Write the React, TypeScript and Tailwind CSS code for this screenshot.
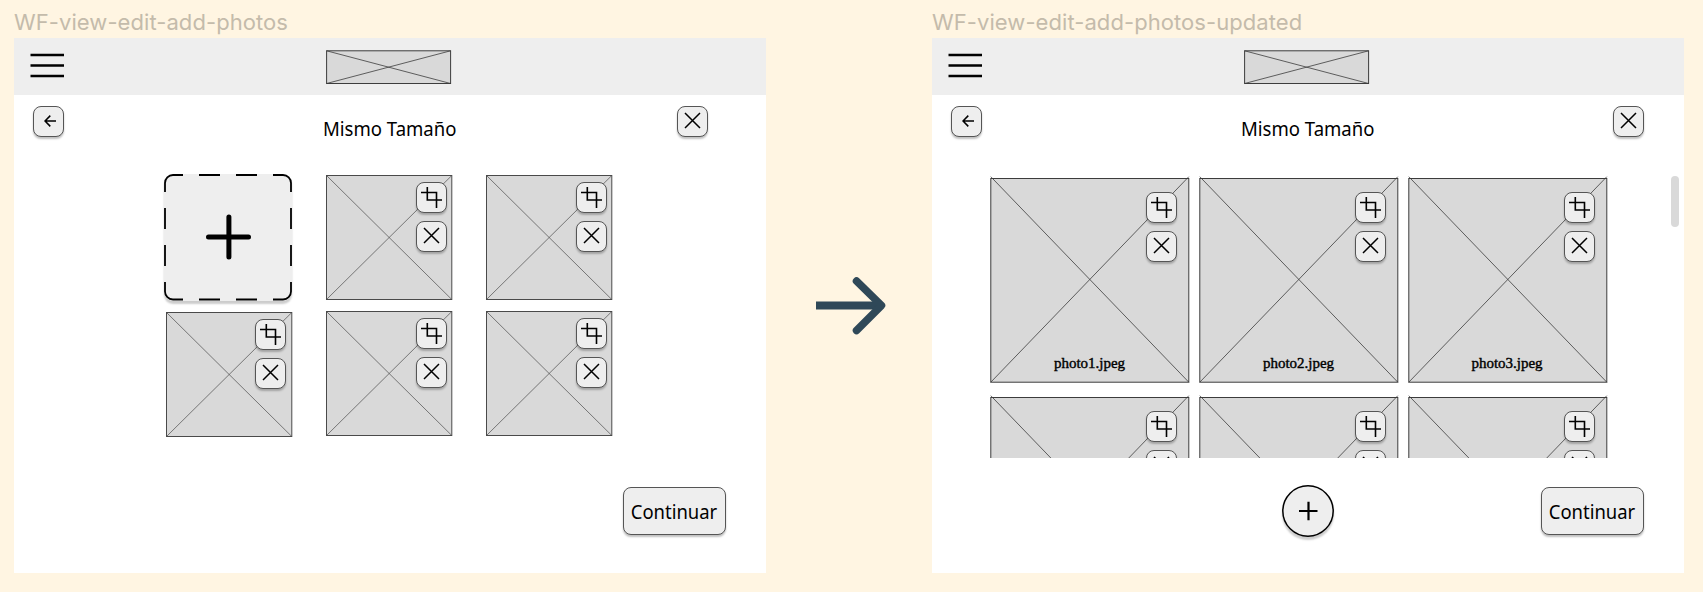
import type { ReactNode } from "react";

function IconButton({ children, className = "" }: { children: ReactNode; className?: string }) {
  return (
    <button
      className={`flex h-[31px] w-[31px] shrink-0 items-center justify-center rounded-[8px] border border-[#555] bg-[#eee] shadow-[0_2px_2px_rgba(0,0,0,0.25)] ${className}`}
    >
      {children}
    </button>
  );
}

function CloseIcon() {
  return (
    <svg width="17" height="17" viewBox="0 0 17 17" className="relative -top-px" fill="none" stroke="#000" strokeWidth="1.5">
      <path d="M1 1L16 16M16 1L1 16" />
    </svg>
  );
}

function CropIcon() {
  return (
    <svg width="21" height="21" viewBox="0 0 21 21" fill="none" stroke="#000" strokeWidth="1.6">
      <path d="M0 5.5H15.5V21M6.3 0V13H21" />
    </svg>
  );
}

function BackIcon() {
  return (
    <svg width="12" height="12" viewBox="0 0 12 12" className="relative -top-px left-px" fill="none" stroke="#000" strokeWidth="1.5">
      <path d="M12 6H1M6.3 0.6L1 6L6.3 11.4" />
    </svg>
  );
}

function TileActions({ className }: { className: string }) {
  return (
    <div className={`absolute flex flex-col gap-[8px] ${className}`}>
      <IconButton>
        <CropIcon />
      </IconButton>
      <IconButton>
        <CloseIcon />
      </IconButton>
    </div>
  );
}

function SmallPhoto({ className = "" }: { className?: string }) {
  return (
    <div className={`relative h-[126px] w-[127px] ${className}`}>
      <svg width="127" height="126" viewBox="0 0 127 126" className="block" stroke="#4a4a4a">
        <rect x="0.5" y="0.5" width="125.3" height="124" fill="#d9d9d9" strokeWidth="1" />
        <path d="M0.5 0.5L125.8 124.500M125.8 0.5L0.5 124.500" strokeWidth="0.7" />
      </svg>
      <TileActions className="left-[89.8px] top-[7px]" />
    </div>
  );
}

function LargePhoto({ name }: { name?: string }) {
  return (
    <div className="relative h-[207px] w-[200px]">
      <svg width="200" height="207" viewBox="0 0 200 207" className="block" stroke="#3c3c3c">
        <rect x="0.8" y="2.5" width="198" height="203.700" fill="#d9d9d9" strokeWidth="1" />
        <path d="M0.8 0.7L198.8 206.2M198.8 0.7L0.8 206.2" strokeWidth="0.8" />
      </svg>
      <TileActions className="left-[156.3px] top-[16px]" />
      {name && (
        <span className="absolute left-0 right-[1px] top-[177px] text-center font-['Liberation_Serif',serif] text-[15px] leading-[20px] text-black [-webkit-text-stroke:0.4px_black]">
          {name}
        </span>
      )}
    </div>
  );
}

function AddTile() {
  return (
    <div className="-ml-[1.5px] h-[127px] w-[128px] rounded-[9px] bg-[#eee] shadow-[0_3px_2px_rgba(0,0,0,0.2)]">
      <svg width="128" height="127" viewBox="0 0 128 127" className="block" fill="none" stroke="#000">
        <path
          strokeWidth="1.8"
          d="M19 1H9A8 8 0 0 0 1 9V18M109 1H119A8 8 0 0 1 127 9V18M19 125.5H9A8 8 0 0 1 1 117.500V108M109 125.500H119A8 8 0 0 0 127 117.500V108M35 1H56M72 1H93M35 125.500H56M72 125.500H93M1 34V55M1 71V92M127 34V55M127 71V92"
        />
        <path strokeWidth="5" strokeLinecap="round" d="M44.5 63H84.500M64.900 43V83" />
      </svg>
    </div>
  );
}

function Frame({ title, closeClass, children }: { title: string; closeClass: string; children: ReactNode }) {
  return (
    <section className="w-[752px] shrink-0">
      <h2 className="h-[38px] whitespace-nowrap pt-[8px] font-['Inter',sans-serif] text-[22px] leading-[28px] tracking-[0.07px] text-[#c4bbab]">
        {title}
      </h2>
      <div className="h-[535px] bg-white">
        <header className="flex h-[57px] bg-[#eee]">
          <svg width="34" height="26" viewBox="0 0 34 26" className="ml-[16px] mt-[15px]" stroke="#000" strokeWidth="2.4">
            <path d="M0.5 2H34M0.5 12.500H34M0.5 23H34" />
          </svg>
          <svg width="126" height="35" viewBox="0 0 126 35" className="ml-[262px] mt-[12px]" stroke="#3c3c3c">
            <rect x="0.6" y="0.8" width="124" height="32.700" fill="#d9d9d9" />
            <path d="M0.6 0.800L124.600 33.500M124.600 0.800L0.6 33.500" strokeWidth="0.8" />
          </svg>
        </header>
        <div className="flex h-[79px] pt-[11px]">
          <IconButton className="ml-[19px]">
            <BackIcon />
          </IconButton>
          <h1 className="ml-[259px] mt-[7px] w-[132px] origin-left scale-x-[0.904] whitespace-nowrap font-['Noto_Sans',sans-serif] text-[20.5px] leading-[30px] text-black">
            Mismo Tamaño
          </h1>
          <IconButton className={closeClass}>
            <CloseIcon />
          </IconButton>
        </div>
        {children}
      </div>
    </section>
  );
}

function ContinueButton() {
  return (
    <button className="flex h-[48px] w-[103px] items-center justify-center rounded-[8px] border border-[#555] bg-[#eee] shadow-[0_2px_2px_rgba(0,0,0,0.25)]">
      <span className="scale-x-[0.9] whitespace-nowrap font-['Noto_Sans',sans-serif] text-[20.5px] leading-[30px] text-black">
        Continuar
      </span>
    </button>
  );
}

const photos = ["photo1.jpeg", "photo2.jpeg", "photo3.jpeg"];

export default function App() {
  return (
    <main className="flex h-[592px] w-[1703px] overflow-hidden bg-[#fff5e2] pl-[14px]">
      <Frame title="WF-view-edit-add-photos" closeClass="ml-[222px]">
        <div className="ml-[151.500px] grid h-[313px] grid-cols-[160.300px_160.300px_127px] grid-rows-[136.500px_127px]">
          <AddTile />
          <SmallPhoto className="mt-px" />
          <SmallPhoto className="mt-px" />
          <SmallPhoto className="mt-[1.500px]" />
          <SmallPhoto className="mt-[0.500px]" />
          <SmallPhoto className="mt-[0.500px]" />
        </div>
        <div className="flex justify-end pr-[40px]">
          <ContinueButton />
        </div>
      </Frame>

      <div className="flex w-[166px] shrink-0 pl-[49px] pt-[275px]">
        <svg width="72" height="62" viewBox="0 0 72 62" fill="none" stroke="#2f4858" strokeWidth="8">
          <path d="M1 30.500H66" />
          <path d="M41.500 6L66.500 30.500L41.500 55.500" strokeLinecap="round" strokeLinejoin="round" strokeWidth="7.500" />
        </svg>
      </div>

      <Frame title="WF-view-edit-add-photos-updated" closeClass="ml-[240px]">
        <div className="flex h-[310px]">
          <div className="ml-[58px] mt-[2px] grid h-[282px] w-[618px] grid-cols-[209px_208.500px_200px] grid-rows-[219px_207px] overflow-hidden">
            {photos.map((name) => (
              <LargePhoto key={name} name={name} />
            ))}
            <LargePhoto />
            <LargePhoto />
            <LargePhoto />
          </div>
          <div className="ml-[63px] mt-[2px] h-[51px] w-[8px] rounded-full bg-[#d9d9d9]" />
        </div>
        <div className="flex">
          <button className="ml-[350px] mt-[0.5px] flex h-[52px] w-[52px] items-center justify-center rounded-full bg-[#eee] shadow-[0_3px_2px_rgba(0,0,0,0.2)]">
            <svg width="52" height="52" viewBox="0 0 52 52" fill="none" stroke="#000">
              <circle cx="26" cy="26" r="25.200" strokeWidth="1.500" />
              <path strokeWidth="2.200" d="M17 26H35.500M26.500 16.700V35.300" />
            </svg>
          </button>
          <div className="ml-[207px] mt-[3px]">
            <ContinueButton />
          </div>
        </div>
      </Frame>
    </main>
  );
}
